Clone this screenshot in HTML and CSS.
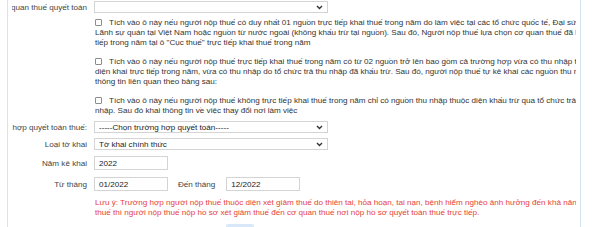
FILE: index.html
```html
<!DOCTYPE html>
<html lang="vi">
<head>
    <meta charset="UTF-8">
    <title>Quyết toán thuế TNCN</title>
    <link rel="stylesheet" href="styles.css">
</head>
<body>
    <div class="frame">
        <div class="panel">
            <div class="row">
                <label class="label">Cơ quan thuế quyết toán</label>
                <span class="select-wrap wide">
                    <select class="select"><option></option></select>
                    <svg class="chev" width="7" height="5" viewBox="0 0 7 5"><path d="M1 1l2.5 2.5L6 1" fill="none" stroke="#333" stroke-width="1.4"/></svg>
                </span>
            </div>

            <p class="check"><input type="checkbox" class="box">Tích vào ô này nếu người nộp thuế có duy nhất 01 nguồn trực tiếp khai thuế trong năm do làm việc tại các tổ chức quốc tế, Đại sứ quán,<br>Lãnh sự quán tại Việt Nam hoặc nguồn từ nước ngoài (không khấu trừ tại nguồn). Sau đó, Người nộp thuế lựa chọn cơ quan thuế đã lựa chọn<br>tiếp trong năm tại ô "Cục thuế" trực tiếp khai thuế trong năm</p>

            <p class="check"><input type="checkbox" class="box">Tích vào ô này nếu người nộp thuế trực tiếp khai thuế trong năm có từ 02 nguồn trở lên bao gồm cả trường hợp vừa có thu nhập thuộc<br>diện khai trực tiếp trong năm, vừa có thu nhập do tổ chức trả thu nhập đã khấu trừ. Sau đó, người nộp thuế tự kê khai các nguồn thu nhập và<br>thông tin liên quan theo bảng sau:</p>

            <p class="check"><input type="checkbox" class="box">Tích vào ô này nếu người nộp thuế không trực tiếp khai thuế trong năm chỉ có nguồn thu nhập thuộc diện khấu trừ qua tổ chức trả thu<br>nhập. Sau đó khai thông tin về việc thay đổi nơi làm việc</p>

            <div class="row">
                <label class="label">Trường hợp quyết toán thuế:</label>
                <span class="select-wrap wide">
                    <select class="select"><option>-----Chọn trường hợp quyết toán-----</option></select>
                    <svg class="chev" width="7" height="5" viewBox="0 0 7 5"><path d="M1 1l2.5 2.5L6 1" fill="none" stroke="#333" stroke-width="1.4"/></svg>
                </span>
            </div>

            <div class="row">
                <label class="label">Loại tờ khai</label>
                <span class="select-wrap wide">
                    <select class="select"><option>Tờ khai chính thức</option></select>
                    <svg class="chev" width="7" height="5" viewBox="0 0 7 5"><path d="M1 1l2.5 2.5L6 1" fill="none" stroke="#333" stroke-width="1.4"/></svg>
                </span>
            </div>

            <div class="row tall">
                <label class="label">Năm kê khai</label>
                <input type="text" class="field" value="2022">
            </div>

            <div class="row tall">
                <label class="label">Từ tháng</label>
                <input type="text" class="field" value="01/2022">
                <label class="label-inline">Đến tháng</label>
                <input type="text" class="field" value="12/2022">
            </div>

            <p class="note">Lưu ý: Trường hợp người nộp thuế thuộc diện xét giảm thuế do thiên tai, hỏa hoạn, tai nạn, bệnh hiểm nghèo ảnh hưởng đến khả năng nộp<br>thuế thì người nộp thuế nộp hồ sơ xét giảm thuế đến cơ quan thuế nơi nộp hồ sơ quyết toán thuế trực tiếp.</p>

            <div class="actions">
                <button class="btn"></button>
            </div>
        </div>
    </div>
</body>
</html>
```

FILE: styles.css
```css
body {
    margin: 0;
    width: 600px;
    height: 227px;
    overflow: hidden;
    background-color: white;
    font-family: "Liberation Sans", Arial, sans-serif;
    font-size: 8.1px;
    color: #333;
}
.frame {
    margin-left: 7px;
    width: 572px;
    height: 227px;
    border-left: 1px solid #d6e5f5;
    border-right: 1px solid #d6e5f5;
}
.panel {
    margin: 0 4px 0 4px;
    padding-top: 1px;
    overflow: hidden;
    height: 226px;
}
.row {
    display: flex;
    align-items: center;
    gap: 7px;
    height: 12px;
    margin-top: 5px;
}
.row:first-child {
    margin-top: 0;
}
.row.tall {
    height: 14px;
    margin-top: 6px;
}
.row.tall + .row.tall {
    margin-top: 7px;
}
.label {
    flex: none;
    width: 75px;
    display: flex;
    justify-content: flex-end;
    white-space: nowrap;
    color: #444;
}
.label-inline {
    margin: 0 4px 0 3px;
    white-space: nowrap;
    color: #444;
}
.select-wrap {
    position: relative;
    display: block;
    height: 12px;
}
.select-wrap.wide {
    width: 234px;
}
.select {
    appearance: none;
    -webkit-appearance: none;
    width: 100%;
    height: 12px;
    margin: 0;
    padding: 0 4px;
    border: 1px solid #d4d4d4;
    border-radius: 0;
    background-color: white;
    font-family: inherit;
    font-size: 8.1px;
    color: #222;
    box-sizing: border-box;
}
.chev {
    position: absolute;
    right: 5px;
    top: 4px;
}
.field {
    width: 74px;
    height: 14px;
    margin: 0;
    padding: 0 4px;
    border: 1px solid #d4d4d4;
    font-family: inherit;
    font-size: 8.1px;
    color: #222;
    box-sizing: border-box;
}
.check {
    margin: 5px 0 9px 83px;
    line-height: 10px;
    white-space: nowrap;
}
.check + .check {
    margin-top: 0;
}
.box {
    appearance: none;
    -webkit-appearance: none;
    width: 7px;
    height: 7px;
    margin: 0 7px 0 0;
    border: 1px solid #8c8c8c;
    border-radius: 1px;
    vertical-align: -1px;
    background-color: white;
}
.check:nth-of-type(3) {
    margin-bottom: 0;
}
.note {
    margin: 7px 0 0 83px;
    line-height: 10px;
    white-space: nowrap;
    color: #e5413a;
}
.actions {
    margin-top: 6px;
    padding-left: 214px;
}
.btn {
    display: block;
    width: 28px;
    height: 14px;
    border: none;
    border-radius: 2px;
    background-color: #d8e8f8;
}
```
